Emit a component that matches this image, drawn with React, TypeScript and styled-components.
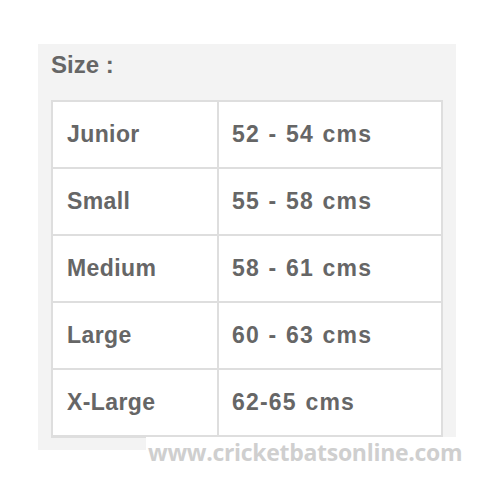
import React from "react";
import styled, { createGlobalStyle } from "styled-components";

const Global = createGlobalStyle`
  html, body { margin: 0; padding: 0; background: #ffffff; }
  body { width: 493px; height: 493px; overflow: hidden; }
`;

const Page = styled.div`
  position: relative;
  width: 493px;
  height: 493px;
  padding: 44px 37px 43px 38px;
  box-sizing: border-box;
`;

const Panel = styled.div`
  background: #f3f3f3;
  height: 100%;
  padding: 7px 13px 0 13px;
  box-sizing: border-box;
  display: flex;
  flex-direction: column;
`;

const Title = styled.div`
  font-family: "Liberation Sans", Arial, sans-serif;
  font-weight: 700;
  font-size: 24px;
  color: #666666;
  height: 49px;
  line-height: 28px;
`;

const Table = styled.div`
  display: grid;
  grid-template-columns: 164px 1fr;
  grid-auto-rows: 67px;
  background: #ffffff;
  border: 2px solid #dedede;
  border-bottom-width: 1px;
`;

const Cell = styled.div<{ $right?: boolean }>`
  display: flex;
  align-items: center;
  padding-left: ${(p) => (p.$right ? "13px" : "14px")};
  border-bottom: 2px solid #dedede;
  border-left: ${(p) => (p.$right ? "2px solid #dedede" : "none")};
  font-family: "Liberation Sans", Arial, sans-serif;
  font-weight: 700;
  font-size: 23px;
  letter-spacing: ${(p) => (p.$right ? "1.2px" : "0.4px")};
  word-spacing: 1px;
  color: #666666;
`;

const Watermark = styled.div`
  position: absolute;
  left: 146px;
  top: 437px;
  font-family: "Open Sans", sans-serif;
  font-weight: 700;
  font-size: 23px;
  letter-spacing: -0.3px;
  color: #cfcfcf;
  background: #ffffff;
  line-height: 30px;
  padding: 0 2px;
`;

const rows: [string, string][] = [
  ["Junior", "52 - 54 cms"],
  ["Small", "55 - 58 cms"],
  ["Medium", "58 - 61 cms"],
  ["Large", "60 - 63 cms"],
  ["X-Large", "62-65 cms"],
];

export default function App() {
  return (
    <>
      <Global />
      <Page>
        <Panel>
          <Title>Size :</Title>
          <Table>
            {rows.map(([a, b]) => (
              <React.Fragment key={a}>
                <Cell>{a}</Cell>
                <Cell $right>{b}</Cell>
              </React.Fragment>
            ))}
          </Table>
        </Panel>
        <Watermark>www.cricketbatsonline.com</Watermark>
      </Page>
    </>
  );
}
